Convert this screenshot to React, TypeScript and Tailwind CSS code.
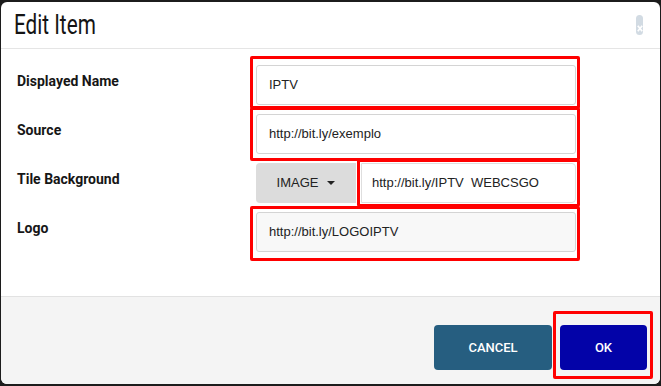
import React from "react";

const rows = [
  { label: "Displayed Name", value: "IPTV" },
  { label: "Source", value: "http://bit.ly/exemplo" },
];

function Field({ value, muted }: { value: string; muted?: boolean }) {
  return (
    <div
      className={`flex h-10 w-[320px] items-center rounded-[3px] border border-[#d4d4d4] pl-3 text-[13px] text-[#222] whitespace-pre ${
        muted ? "bg-[#f8f8f8]" : "bg-white"
      }`}
    >
      {value}
    </div>
  );
}

function Label({ children }: { children: React.ReactNode }) {
  return (
    <div className="w-[255px] shrink-0 pl-4 pt-[6px] font-['Roboto',sans-serif] text-[14px] font-bold leading-5 text-[#161616]">
      {children}
    </div>
  );
}

export default function App() {
  return (
    <div className="h-[386px] w-[661px] overflow-hidden bg-[#1c1c1c] pl-[1px] pt-[2px] font-['Liberation_Sans',Arial,sans-serif]">
      <div className="relative flex h-[382px] w-[659px] flex-col overflow-hidden rounded-md bg-white">
        {/* Header */}
        <div className="flex h-[47px] shrink-0 items-center justify-between border-b border-[#e5e5e5] pl-[13px] pr-[17px]">
          <h1 className="origin-left scale-x-[0.74] font-['Roboto',sans-serif] text-[28px] leading-none text-[#141414]">
            Edit Item
          </h1>
          <div className="flex h-5 w-[7px] items-end justify-center rounded-full bg-[#d2dbe3] pb-[3px]">
            <svg width="6" height="7" viewBox="0 0 6 7">
              <path d="M0.8 0.8 L5.2 6.2 M5.2 0.8 L0.8 6.2" stroke="#fff" strokeWidth="1.7" />
            </svg>
          </div>
        </div>

        {/* Body */}
        <div className="flex h-[247px] shrink-0 flex-col gap-[9px] pt-4">
          {rows.map((r) => (
            <div key={r.label} className="flex items-start">
              <Label>{r.label}</Label>
              <Field value={r.value} />
            </div>
          ))}
          <div className="flex items-start">
            <Label>Tile Background</Label>
            <div className="flex h-10 w-[320px]">
              <button className="flex h-10 w-[100px] items-center justify-center gap-[9px] rounded-l-[4px] bg-[#dcdcdc] text-[13px] text-[#222]">
                IMAGE
                <svg width="8" height="4" viewBox="0 0 8 4">
                  <path d="M0 0 H8 L4 4 Z" fill="#222" />
                </svg>
              </button>
              <div className="ml-[5px] flex h-10 flex-1 items-center rounded-r-[4px] border border-[#dedede] bg-white pl-[10px] text-[13px] text-[#222] whitespace-pre">
                http://bit.ly/IPTV  WEBCSGO
              </div>
            </div>
          </div>
          <div className="flex items-start">
            <Label>Logo</Label>
            <Field value="http://bit.ly/LOGOIPTV" muted />
          </div>
        </div>

        {/* Footer */}
        <div className="flex flex-1 items-start justify-end gap-2 border-t border-[#e2e2e2] bg-[#f4f4f4] pr-[13px] pt-[28px]">
          <button className="h-[45px] w-[118px] rounded-[4px] bg-[#265e80] font-['Roboto',sans-serif] text-[13px] font-medium text-white">
            CANCEL
          </button>
          <button className="h-[45px] w-[87px] rounded-[4px] bg-[#0303a8] font-['Roboto',sans-serif] text-[13px] font-medium text-white">
            OK
          </button>
        </div>

        {/* Red annotation boxes */}
        <div className="pointer-events-none absolute left-[249px] top-[54px] h-[53px] w-[330px] rounded-[2px] border-[3px] border-[#ff0000]" />
        <div className="pointer-events-none absolute left-[249px] top-[105px] h-[54px] w-[330px] rounded-[2px] border-[3px] border-[#ff0000]" />
        <div className="pointer-events-none absolute left-[356px] top-[157px] h-[48px] w-[223px] rounded-[2px] border-[3px] border-[#ff0000]" />
        <div className="pointer-events-none absolute left-[249px] top-[204px] h-[55px] w-[330px] rounded-[2px] border-[3px] border-[#ff0000]" />
        <div className="pointer-events-none absolute left-[552px] top-[309px] h-[68px] w-[100px] rounded-[2px] border-[3px] border-[#ff0000]" />
      </div>
    </div>
  );
}
